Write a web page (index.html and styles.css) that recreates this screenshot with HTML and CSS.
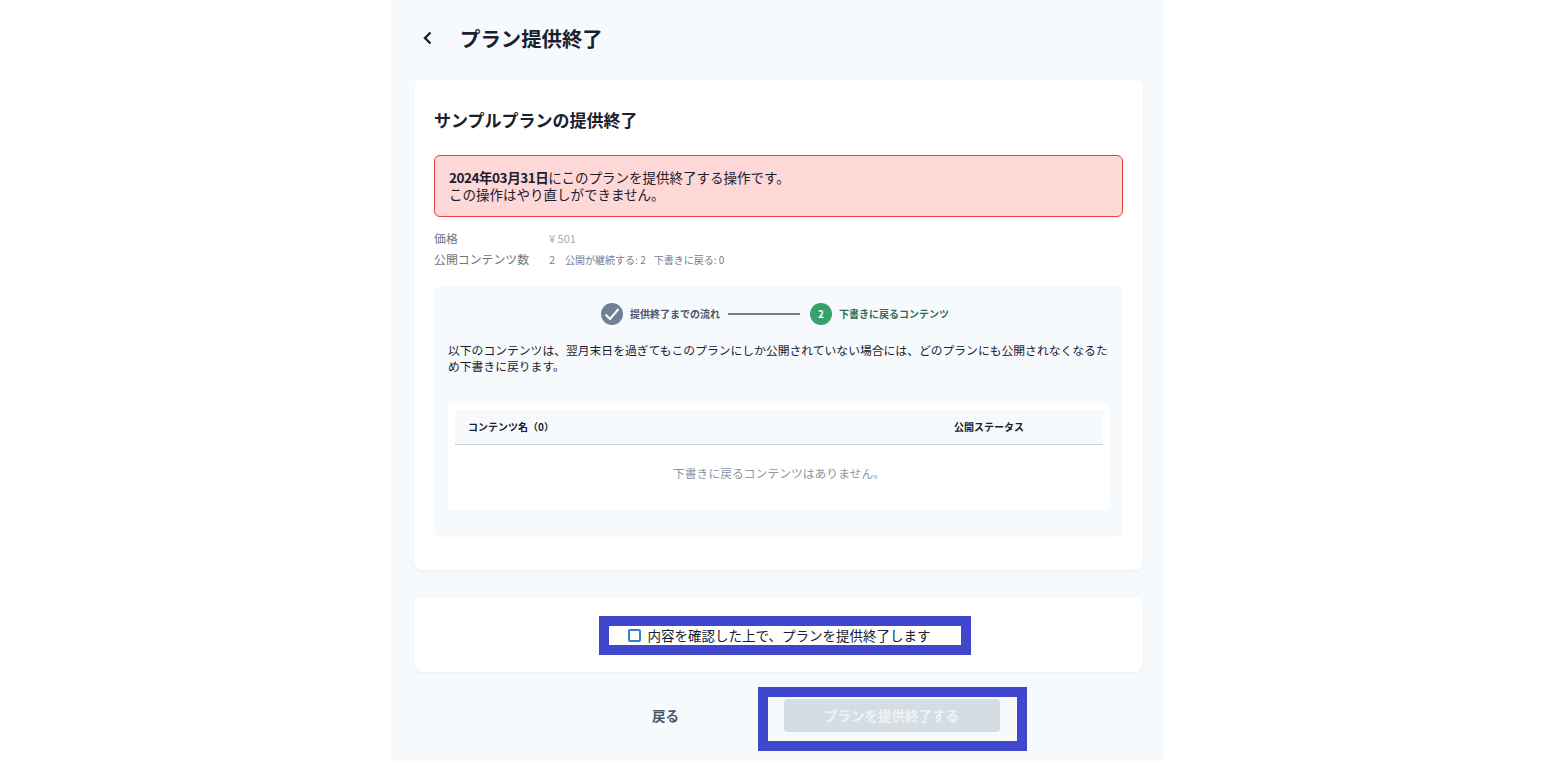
FILE: index.html
```html
<!DOCTYPE html>
<html lang="ja">
<head>
    <meta charset="UTF-8">
    <meta name="viewport" content="width=device-width, initial-scale=1.0">
    <title>プラン提供終了</title>
    <link rel="stylesheet" href="styles.css">
</head>
<body>
    <div class="page">
        <!-- ヘッダー -->
        <header class="page-header">
            <svg class="back-icon" width="12" height="16" viewBox="0 0 12 16" fill="none"><path d="M8.5 2.5 3 8l5.5 5.5" stroke="#1a202c" stroke-width="2.4"/></svg>
            <h1>プラン提供終了</h1>
        </header>

        <!-- メインカード -->
        <section class="card main-card">
            <h2>サンプルプランの提供終了</h2>
            <div class="alert">
                <p><b>2024年03月31日</b>にこのプランを提供終了する操作です。</p>
                <p>この操作はやり直しができません。</p>
            </div>
            <dl class="info">
                <div class="info-row">
                    <dt>価格</dt>
                    <dd class="light">¥ 501</dd>
                </div>
                <div class="info-row">
                    <dt>公開コンテンツ数</dt>
                    <dd>2<span class="sub">公開が継続する: 2</span><span class="sub">下書きに戻る: 0</span></dd>
                </div>
            </dl>

            <div class="panel">
                <div class="steps">
                    <span class="step-circle done">
                        <svg width="16" height="14" viewBox="0 0 16 14" fill="none"><path d="M1.5 7.5 6 12 14.5 2" stroke="#fff" stroke-width="2"/></svg>
                    </span>
                    <span class="step-label">提供終了までの流れ</span>
                    <span class="step-line"></span>
                    <span class="step-circle current">2</span>
                    <span class="step-label current-label">下書きに戻るコンテンツ</span>
                </div>
                <p class="panel-text">以下のコンテンツは、翌月末日を過ぎてもこのプランにしか公開されていない場合には、どのプランにも公開されなくなるため下書きに戻ります。</p>
                <div class="table-box">
                    <div class="table-head">
                        <span class="col-name">コンテンツ名（0）</span>
                        <span class="col-status">公開ステータス</span>
                    </div>
                    <p class="table-empty">下書きに戻るコンテンツはありません。</p>
                </div>
            </div>
        </section>

        <!-- 確認チェック -->
        <section class="card confirm-card">
            <label class="highlight confirm">
                <span class="checkbox"></span>
                内容を確認した上で、プランを提供終了します
            </label>
        </section>

        <!-- ボタン -->
        <div class="actions">
            <a href="#" class="back-link">戻る</a>
            <div class="highlight button-wrap">
                <button class="submit" disabled>プランを提供終了する</button>
            </div>
        </div>
    </div>
</body>
</html>
```

FILE: styles.css
```css
* {
    box-sizing: border-box;
}

html,
body {
    height: 100%;
}

body {
    margin: 0;
    background-color: #ffffff;
    color: #1a202c;
    font-family: "Noto Sans CJK JP", "Noto Sans", sans-serif;
    overflow: hidden;
}

p,
h1,
h2,
dl,
dd {
    margin: 0;
}

.page {
    width: 773px;
    height: 761px;
    margin-left: 391px;
    padding: 0 21px 0 23px;
    background-color: #f7fafc;
}

.page-header {
    display: flex;
    align-items: center;
    height: 80px;
    padding: 0 0 5px 8px;
}

.back-icon {
    margin-right: 26px;
}

.page-header h1 {
    font-size: 20.4px;
    font-weight: 700;
    line-height: 30px;
}

.card {
    background-color: #ffffff;
    border-radius: 8px;
    box-shadow: 0 1px 3px rgba(0, 0, 0, 0.06);
}

.main-card {
    height: 490px;
    padding: 26px 20px 0;
}

.main-card h2 {
    font-size: 17px;
    font-weight: 700;
    line-height: 27px;
}

.alert {
    height: 62px;
    margin-top: 22px;
    padding: 13px 14px;
    background-color: #fed7d7;
    border: 1px solid #e53e3e;
    border-radius: 6px;
    font-size: 13.5px;
    line-height: 17px;
}

.alert b {
    font-weight: 700;
    letter-spacing: -0.45px;
}

.info {
    margin-top: 10px;
    font-size: 11.9px;
    color: #718096;
}

.info-row {
    display: flex;
    align-items: center;
    height: 21px;
}

.info-row dt {
    width: 115px;
    color: #6f7580;
}

.info-row dd {
    font-size: 11px;
}

.info-row .light {
    color: #a0aec0;
}

.sub {
    margin-left: 10px;
    font-size: 10px;
}

.sub + .sub {
    margin-left: 8px;
}

.panel {
    height: 251px;
    margin-top: 17px;
    padding: 16px 14px 0;
    background-color: #f7fafc;
    border-radius: 8px;
}

.steps {
    display: flex;
    align-items: center;
    justify-content: center;
    height: 23px;
    padding-right: 7px;
    font-size: 10px;
    font-weight: 700;
}

.step-circle {
    display: flex;
    align-items: center;
    justify-content: center;
    width: 22px;
    height: 22px;
    border-radius: 50%;
    color: #ffffff;
}

.step-circle.done {
    background-color: #718096;
}

.step-circle.current {
    background-color: #38a169;
}

.step-label {
    margin-left: 7px;
    color: #4a5568;
}

.step-label.current-label {
    color: #2f6b57;
}

.step-line {
    width: 72px;
    height: 2px;
    margin: 0 10px 0 8px;
    background-color: #718096;
}

.panel-text {
    margin-top: 17px;
    font-size: 11.8px;
    line-height: 16px;
}

.table-box {
    height: 107px;
    margin-top: 29px;
    padding: 7px 6px 0 7px;
    background-color: #ffffff;
}

.table-head {
    display: flex;
    align-items: center;
    height: 35px;
    padding: 0 0 2px 13px;
    background-color: #f7fafc;
    border-bottom: 1px solid #cbd0d8;
    font-size: 10px;
    font-weight: 700;
}

.col-name {
    width: 486px;
}

.table-empty {
    margin-top: 19px;
    color: #8f96a3;
    font-size: 11.8px;
    line-height: 18px;
    text-align: center;
}

.confirm-card {
    display: flex;
    justify-content: center;
    align-items: center;
    height: 75px;
    margin-top: 27px;
    padding: 2px 0 0 12px;
}

.highlight {
    border: 10px solid #4147cc;
}

.confirm {
    display: flex;
    align-items: center;
    width: 372px;
    height: 39px;
    padding-left: 19px;
    font-size: 13.5px;
    line-height: 19px;
}

.checkbox {
    width: 13px;
    height: 13px;
    margin-right: 7px;
    background-color: #ffffff;
    border: 2px solid #3182ce;
    border-radius: 2px;
}

.actions {
    display: flex;
    align-items: center;
    margin-top: 15px;
}

.back-link {
    width: 344px;
    padding: 0 0 9px 238px;
    color: #4a5568;
    font-size: 13.5px;
    font-weight: 700;
    text-decoration: none;
}

.button-wrap {
    display: flex;
    align-items: center;
    justify-content: center;
    width: 269px;
    height: 64px;
    padding: 0 2px 7px 0;
}

.submit {
    width: 216px;
    height: 33px;
    padding: 0 0 2px;
    background-color: #d5dde4;
    border: none;
    border-radius: 4px;
    color: #f0f3f6;
    font-family: inherit;
    font-size: 13.5px;
    font-weight: 700;
}
```
